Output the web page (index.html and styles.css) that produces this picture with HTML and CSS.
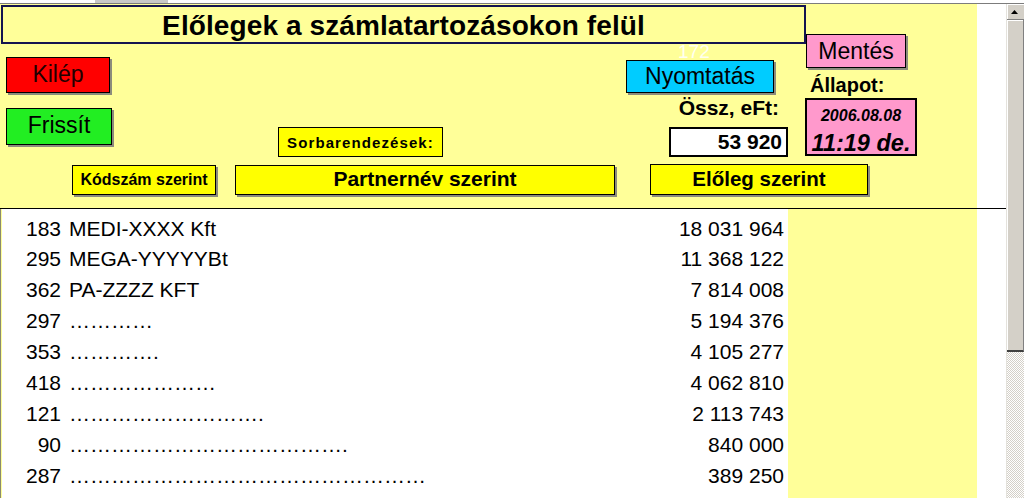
FILE: index.html
```html
<!DOCTYPE html>
<html lang="hu">
<head>
<meta charset="utf-8">
<title>Előlegek</title>
<link rel="stylesheet" href="styles.css">
</head>
<body>
<div class="topstrip"><span class="tab"></span></div>
<div class="window">
  <div class="sheet">
    <header class="header">
      <div class="title">Előlegek a számlatartozásokon felül</div>
      <div class="mid">
        <div class="col-left">
          <div class="btn btn-red">Kilép</div>
          <div class="btn btn-green">Frissít</div>
        </div>
        <div class="sortlabel">Sorbarendezések:</div>
        <div class="col-print">
          <div class="ghost">172</div>
          <div class="btn btn-cyan">Nyomtatás</div>
          <div class="label-sum">Össz, eFt:</div>
          <div class="sumbox">53 920</div>
        </div>
        <div class="col-state">
          <div class="btn btn-pink">Mentés</div>
          <div class="label-state">Állapot:</div>
          <div class="datebox"><span class="date">2006.08.08</span><span class="time">11:19 de.</span></div>
        </div>
      </div>
      <div class="sorts">
        <div class="btn btn-sort sort-code">Kódszám szerint</div>
        <div class="btn btn-sort sort-name">Partnernév szerint</div>
        <div class="btn btn-sort sort-amount">Előleg szerint</div>
      </div>
    </header>
    <div class="list">
      <div class="rows">
        <div class="row"><span class="code">183</span><span class="name">MEDI-XXXX Kft</span><span class="amt">18 031 964</span></div>
        <div class="row"><span class="code">295</span><span class="name">MEGA-YYYYYBt</span><span class="amt">11 368 122</span></div>
        <div class="row"><span class="code">362</span><span class="name">PA-ZZZZ KFT</span><span class="amt">7 814 008</span></div>
        <div class="row"><span class="code">297</span><span class="name">&hellip;&hellip;&hellip;&hellip;</span><span class="amt">5 194 376</span></div>
        <div class="row"><span class="code">353</span><span class="name">&hellip;&hellip;&hellip;&hellip;.</span><span class="amt">4 105 277</span></div>
        <div class="row"><span class="code">418</span><span class="name">&hellip;&hellip;&hellip;&hellip;&hellip;&hellip;&hellip;</span><span class="amt">4 062 810</span></div>
        <div class="row"><span class="code">121</span><span class="name">&hellip;&hellip;&hellip;&hellip;&hellip;&hellip;&hellip;&hellip;&hellip;.</span><span class="amt">2 113 743</span></div>
        <div class="row"><span class="code">90</span><span class="name">&hellip;&hellip;&hellip;&hellip;&hellip;&hellip;&hellip;&hellip;&hellip;&hellip;&hellip;&hellip;&hellip;.</span><span class="amt">840 000</span></div>
        <div class="row"><span class="code">287</span><span class="name">&hellip;&hellip;&hellip;&hellip;&hellip;&hellip;&hellip;&hellip;&hellip;&hellip;&hellip;&hellip;&hellip;&hellip;&hellip;&hellip;&hellip;</span><span class="amt">389 250</span></div>
      </div>
      <div class="ycol"></div>
    </div>
  </div>
  <div class="scrollbar">
    <div class="sb-up"><svg class="sb-arrow" width="17" height="15" viewBox="0 0 17 15"><polygon points="4,10 11,10 7.5,6" fill="#000"/></svg></div>
    <div class="sb-thumb"></div>
    <div class="sb-track"></div>
  </div>
</div>
</body>
</html>
```
FILE: styles.css
```css
* { box-sizing: border-box; margin: 0; padding: 0; }
html, body { width: 1024px; height: 498px; overflow: hidden; background: #fff; }
body { font-family: "Liberation Sans", Arial, sans-serif; color: #000; }

.topstrip { height: 4px; border-bottom: 1px solid #7c7c7c; display: flex; }
.tab { margin-left: 95px; width: 73px; height: 3px; background: #c8c8c8; }

.window { display: flex; height: 494px; }
.sheet { width: 1006px; display: flex; flex-direction: column; }

.header {
  height: 205px;
  border-bottom: 1px solid #000;
  background: linear-gradient(to right, #ffff99 977px, #fff 977px);
  display: flex;
  flex-direction: column;
}
.title {
  margin: 1px 0 0 1px;
  width: 805px;
  height: 39px;
  border: 2px solid #141450;
  font-weight: bold;
  font-size: 28px;
  letter-spacing: 0.1px;
  display: flex;
  align-items: center;
  justify-content: center;
  padding-top: 3px;
  white-space: nowrap;
}

.mid { display: flex; align-items: flex-start; height: 113px; }

.btn {
  display: flex;
  align-items: center;
  justify-content: center;
  border: 1px solid #000;
  box-shadow: 2px 2px 0 #8c8c7c;
  white-space: nowrap;
}
.col-left {
  margin-left: 6px;
  margin-top: 13px;
  width: 106px;
  display: flex;
  flex-direction: column;
  align-items: flex-start;
  gap: 15px;
}
.btn-red { width: 104px; height: 36px; background: #ff0000; color: #200000; font-size: 23px; padding-bottom: 2px; }
.btn-green { width: 106px; height: 37px; background: #22ee22; font-size: 23px; padding-bottom: 3px; }

.sortlabel {
  margin-left: 166px;
  margin-top: 83px;
  width: 165px;
  height: 30px;
  background: #ffff00;
  border: 1px solid #000;
  font-weight: bold;
  font-size: 15px;
  letter-spacing: 1.1px;
  display: flex;
  align-items: center;
  justify-content: center;
  white-space: nowrap;
}

.col-print { margin-left: 183px; width: 162px; display: flex; flex-direction: column; align-items: flex-start; }
.ghost { height: 16px; line-height: 16px; font-size: 19px; color: #fffff0; margin-left: 52px; }
.btn-cyan { width: 148px; height: 33px; background: #00ccff; font-size: 23px; }
.label-sum { margin-top: 3px; align-self: flex-end; margin-right: 9px; height: 24px; line-height: 24px; font-size: 21px; font-weight: bold; white-space: nowrap; }
.sumbox {
  margin-top: 7px;
  margin-left: 43px;
  width: 119px;
  height: 30px;
  border: 2px solid #000;
  background: #fff;
  font-size: 21px;
  font-weight: bold;
  text-align: right;
  padding-right: 4px;
  line-height: 25px;
}

.col-state { margin-left: 17px; margin-top: -10px; width: 112px; display: flex; flex-direction: column; align-items: flex-start; }
.btn-pink { margin-left: 1px; width: 100px; height: 34px; background: #ff99cc; font-size: 23px; }
.label-state { margin-top: 5px; margin-left: 5px; height: 24px; line-height: 24px; font-size: 20px; font-weight: bold; }
.datebox {
  margin-top: 1px;
  width: 112px;
  height: 58px;
  border: 2px solid #000;
  background: #ff99cc;
  display: flex;
  flex-direction: column;
  align-items: center;
  font-weight: bold;
  font-style: italic;
}
.date { font-size: 16px; line-height: 18px; margin-top: 7px; }
.time { font-size: 23.5px; line-height: 26px; margin-top: 5px; }

.sorts { display: flex; align-items: flex-start; margin-top: 7px; }
.btn-sort { background: #ffff00; font-weight: bold; }
.sort-code { margin-left: 72px; margin-top: 1px; width: 144px; height: 30px; font-size: 16px; }
.sort-name { margin-left: 19px; margin-top: 1px; width: 380px; height: 30px; font-size: 21px; padding-bottom: 2px; }
.sort-amount { margin-left: 35px; width: 218px; height: 31px; font-size: 20.5px; padding-bottom: 1px; }

.list { display: flex; flex: 1; }
.rows {
  width: 788px;
  padding-top: 4.5px;
  background: linear-gradient(to right, #8a8a70 0 1px, #ffff99 1px 2px, #fff 2px);
}
.ycol { width: 189px; background: #ffff99; }

.row {
  display: grid;
  grid-template-columns: 61px 1fr auto;
  height: 30.9px;
  line-height: 30.9px;
  font-size: 21px;
  white-space: nowrap;
}
.code { text-align: right; }
.name { padding-left: 8px; }
.amt { padding-right: 4px; text-align: right; }

.scrollbar { width: 18px; display: flex; flex-direction: column; border-left: 1px solid #e4e2dc; }
.sb-up { height: 16px; background: #d4d0c8; border-bottom: 1px solid #808080; box-shadow: inset 1px 1px 0 #fff; }
.sb-arrow { display: block; }
.sb-thumb { height: 332px; background: #d4d0c8; border-right: 1px solid #808080; border-bottom: 2px solid #404040; box-shadow: inset 1px 1px 0 #fff; }
.sb-track { flex: 1; background: repeating-conic-gradient(#d4d0c8 0 25%, #fff 0 50%) 0 0 / 2px 2px; }
```
